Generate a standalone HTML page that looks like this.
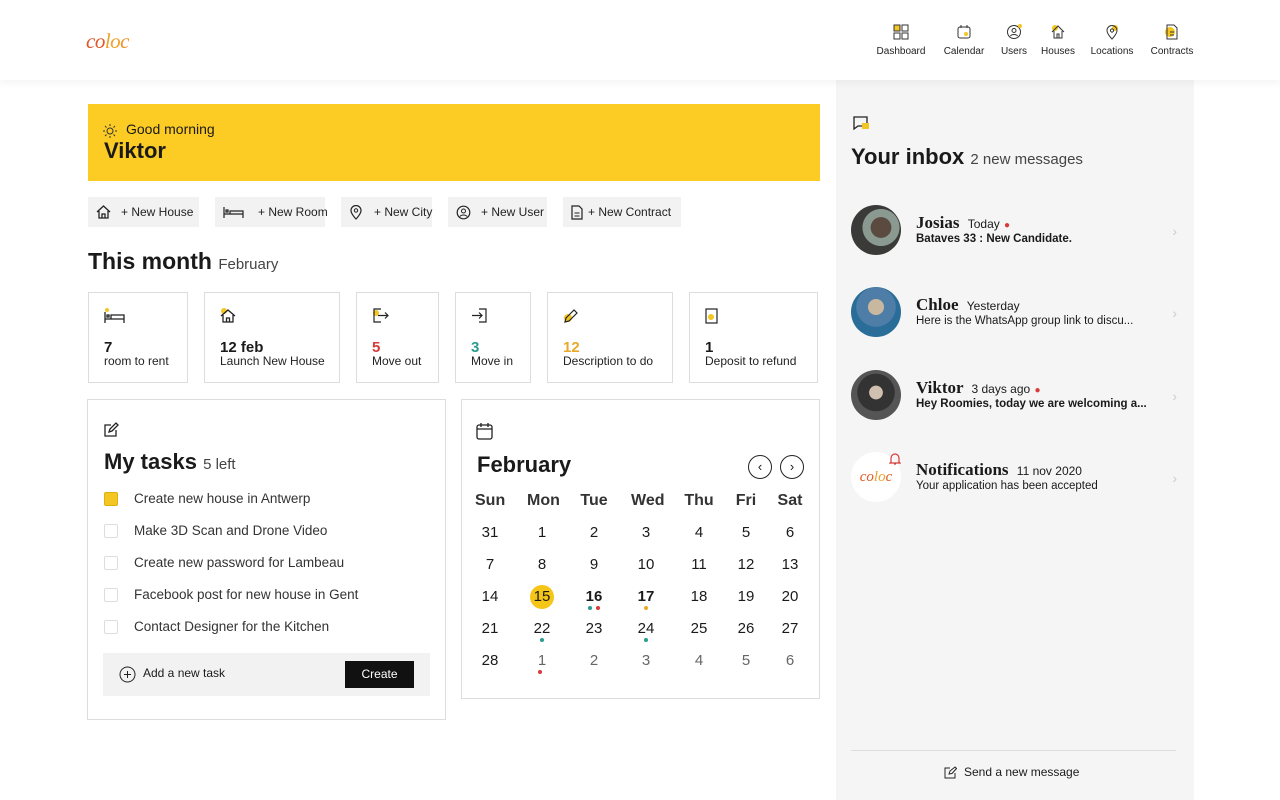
<!DOCTYPE html>
<html><head><meta charset="utf-8"><style>
*{box-sizing:border-box;margin:0;padding:0}
body{width:1280px;height:800px;overflow:hidden;background:#fff;font-family:"Liberation Sans",sans-serif;color:#1a1a1a;position:relative}
.abs{position:absolute}
header{position:absolute;left:0;top:0;width:1280px;height:80px;background:#fff;box-shadow:0 2px 8px rgba(0,0,0,.06);z-index:2}
.nav{position:absolute;top:24px;font-size:10px;text-align:center;color:#222;white-space:nowrap}
.nav svg{display:block;margin:0 auto 6px}
.btn{position:absolute;top:197px;height:30px;background:#f2f2f2;font-size:12px;line-height:30px;padding-left:33px;color:#222;white-space:nowrap}
.btn svg{position:absolute;left:8px;top:8px}
.card{position:absolute;top:292px;height:91px;border:1px solid #ddd;background:#fff}
.card .n{position:absolute;left:15px;top:46px;font-weight:bold;font-size:15px}
.card .l{position:absolute;left:15px;top:61px;font-size:12px;color:#222;white-space:nowrap}
.card svg{position:absolute;left:15px;top:15px}
.box{position:absolute;border:1px solid #ddd;background:#fff}
.task{position:absolute;left:16px;font-size:13.5px;color:#333}
.task i{position:absolute;left:0;top:1px;width:14px;height:14px;border:1px solid #ddd;border-radius:2px;background:#fff}
.task span{position:absolute;left:30px;white-space:nowrap}
.cal{position:absolute;font-size:15px;text-align:center;width:30px;margin-left:-15px}
.dot{position:absolute;width:4px;height:4px;border-radius:2px}
.msg{position:absolute;left:851px;width:330px;height:60px}
.av{position:absolute;left:0;top:0;width:50px;height:50px;border-radius:25px}
.nm{position:absolute;left:65px;top:8px;font-family:"Liberation Serif",serif;font-weight:bold;font-size:17px;white-space:nowrap}
.nm small{font-family:"Liberation Sans",sans-serif;font-weight:normal;font-size:12px;margin-left:4px}
.tx{position:absolute;left:65px;top:28px;font-size:11.5px;white-space:nowrap}
.chev{position:absolute;right:4px;top:18px;color:#ccc;font-size:14px}
</style></head><body>
<header>
<div class="abs" style="left:86px;top:29px;font-size:21px;letter-spacing:-0.5px;color:#e0582a;font-family:'Liberation Serif',serif;font-style:italic">co<span style="color:#f1a12a">lo</span><span style="color:#f0902a">c</span></div>
<div class="nav" style="left:872px;width:58px"><svg width="16" height="16"><rect x="1" y="1" width="6" height="6" fill="#f3c623" stroke="#333"/><rect x="9" y="1" width="6" height="6" fill="none" stroke="#333"/><rect x="1" y="9" width="6" height="6" fill="none" stroke="#333"/><rect x="9" y="9" width="6" height="6" fill="none" stroke="#333"/></svg>Dashboard</div>
<div class="nav" style="left:940px;width:48px"><svg width="16" height="16"><rect x="2" y="3" width="12" height="11" rx="2" fill="none" stroke="#333"/><line x1="5" y1="1" x2="5" y2="4" stroke="#333"/><line x1="11" y1="1" x2="11" y2="4" stroke="#333"/><circle cx="10" cy="10" r="2" fill="#f3c623"/></svg>Calendar</div>
<div class="nav" style="left:998px;width:32px"><svg width="16" height="16"><circle cx="8" cy="8" r="6.5" fill="none" stroke="#333"/><circle cx="8" cy="6.5" r="2" fill="none" stroke="#333"/><path d="M4.5 12c1-2 6-2 7 0" fill="none" stroke="#333"/><circle cx="14" cy="2" r="2" fill="#f3c623"/></svg>Users</div>
<div class="nav" style="left:1040px;width:36px"><svg width="16" height="16"><circle cx="5" cy="4" r="3" fill="#f3c623"/><path d="M2 8L8 2l6 6M4 7v7h8V7M7 14v-4h2v4" fill="none" stroke="#333"/></svg>Houses</div>
<div class="nav" style="left:1088px;width:48px"><svg width="16" height="16"><circle cx="11" cy="4" r="3" fill="#f3c623"/><path d="M8 15s5-5 5-8.5A5 5 0 0 0 3 6.5C3 10 8 15 8 15z" fill="none" stroke="#333"/><circle cx="8" cy="6.5" r="1.6" fill="none" stroke="#333"/></svg>Locations</div>
<div class="nav" style="left:1146px;width:52px"><svg width="16" height="16"><circle cx="6" cy="8" r="5" fill="#f3c623"/><path d="M3 1h7l3 3v11H3z" fill="none" stroke="#333"/><line x1="6" y1="8" x2="10" y2="8" stroke="#333"/><line x1="6" y1="11" x2="10" y2="11" stroke="#333"/></svg>Contracts</div>
</header>

<div class="abs" style="left:836px;top:80px;width:358px;height:720px;background:#f5f5f5"></div>

<div class="abs" style="left:88px;top:104px;width:732px;height:77px;background:#fccb24"></div>
<svg class="abs" style="left:102px;top:123px" width="16" height="16"><circle cx="8" cy="8" r="3" fill="none" stroke="#333"/><g stroke="#333"><line x1="8" y1="1" x2="8" y2="3"/><line x1="8" y1="13" x2="8" y2="15"/><line x1="1" y1="8" x2="3" y2="8"/><line x1="13" y1="8" x2="15" y2="8"/><line x1="3" y1="3" x2="4.5" y2="4.5"/><line x1="11.5" y1="11.5" x2="13" y2="13"/><line x1="3" y1="13" x2="4.5" y2="11.5"/><line x1="11.5" y1="4.5" x2="13" y2="3"/></g></svg>
<div class="abs" style="left:126px;top:121px;font-size:14px">Good morning</div>
<div class="abs" style="left:104px;top:138px;font-size:22px;font-weight:bold">Viktor</div>

<div class="btn" style="left:88px;width:111px"><svg width="15" height="14"><path d="M1 7L7.5 1 14 7M3 6v7h9V6M6 13V9h3v4" fill="none" stroke="#222" stroke-width="1.3"/></svg>+ New House</div>
<div class="btn" style="left:215px;width:110px;padding-left:43px"><svg width="22" height="14"><path d="M1 2v11M1 9h19v4M20 9V6H7v3M3 5h2v2H3z" fill="none" stroke="#222" stroke-width="1.2"/></svg>+ New Room</div>
<div class="btn" style="left:341px;width:91px"><svg width="14" height="15"><path d="M7 14s5-5 5-8.5a5 5 0 0 0-10 0C2 9 7 14 7 14z" fill="none" stroke="#222" stroke-width="1.2"/><circle cx="7" cy="5.5" r="1.7" fill="none" stroke="#222"/></svg>+ New City</div>
<div class="btn" style="left:448px;width:99px"><svg width="15" height="15"><circle cx="7.5" cy="7.5" r="6.3" fill="none" stroke="#222" stroke-width="1.2"/><circle cx="7.5" cy="6" r="2" fill="none" stroke="#222"/><path d="M4 11.5c1-2 6-2 7 0" fill="none" stroke="#222"/></svg>+ New User</div>
<div class="btn" style="left:563px;width:118px;padding-left:25px"><svg width="12" height="15"><path d="M1 1h7l3 3v10H1z" fill="none" stroke="#222" stroke-width="1.2"/><line x1="3.5" y1="8" x2="8.5" y2="8" stroke="#222"/><line x1="3.5" y1="11" x2="8.5" y2="11" stroke="#222"/></svg>+ New Contract</div>

<div class="abs" style="left:88px;top:248px;font-size:23px;font-weight:bold">This month <span style="font-size:15px;font-weight:normal;color:#444">February</span></div>

<div class="card" style="left:88px;width:100px"><svg width="22" height="16"><circle cx="3" cy="2" r="2" fill="#f3c623"/><path d="M1 4v11M1 11h19v4M20 11V7H7v4M3 7h2v2H3z" fill="none" stroke="#222" stroke-width="1.3"/></svg><div class="n">7</div><div class="l">room to rent</div></div>
<div class="card" style="left:204px;width:136px"><svg width="16" height="16"><circle cx="4" cy="3" r="3" fill="#f3c623"/><path d="M1 8L8 2l7 6M3 7v7h10V7M6.5 14v-4h3v4" fill="none" stroke="#222" stroke-width="1.3"/></svg><div class="n">12 feb</div><div class="l">Launch New House</div></div>
<div class="card" style="left:356px;width:83px"><svg width="17" height="16"><circle cx="4" cy="5" r="3" fill="#f3c623"/><path d="M9 1H2v13h7M6 7.5h10M13 4.5l3 3-3 3" fill="none" stroke="#222" stroke-width="1.2"/></svg><div class="n" style="color:#d93a3a">5</div><div class="l">Move out</div></div>
<div class="card" style="left:455px;width:76px"><svg width="17" height="16"><path d="M8 1h7v13H8M1 7.5h10M8 4.5l3 3-3 3" fill="none" stroke="#222" stroke-width="1.2"/></svg><div class="n" style="color:#2a9d8f">3</div><div class="l">Move in</div></div>
<div class="card" style="left:547px;width:126px"><svg width="16" height="16"><circle cx="5" cy="10" r="4" fill="#f3c623"/><path d="M2 14l1-4 8-8 3 3-8 8z" fill="none" stroke="#222" stroke-width="1.2"/></svg><div class="n" style="color:#e8a92a">12</div><div class="l">Description to do</div></div>
<div class="card" style="left:689px;width:129px"><svg width="14" height="16"><rect x="1" y="1" width="11" height="14" fill="none" stroke="#222" stroke-width="1.2"/><circle cx="6" cy="9" r="3" fill="#f3c623"/></svg><div class="n">1</div><div class="l">Deposit to refund</div></div>

<div class="box" style="left:87px;top:399px;width:359px;height:321px">
<svg class="abs" style="left:15px;top:22px" width="16" height="16"><path d="M13 8v6H2V3h6" fill="none" stroke="#222" stroke-width="1.3"/><path d="M6 10l1-3 6-6 2 2-6 6z" fill="none" stroke="#222" stroke-width="1.3"/></svg>
<div class="abs" style="left:16px;top:49px;font-size:22px;font-weight:bold">My tasks <span style="font-size:15px;font-weight:normal;color:#444">5 left</span></div>
<div class="task" style="top:91px"><i style="background:#f3c623;border-color:#e0b010"></i><span>Create new house in Antwerp</span></div>
<div class="task" style="top:123px"><i></i><span>Make 3D Scan and Drone Video</span></div>
<div class="task" style="top:155px"><i></i><span>Create new password for Lambeau</span></div>
<div class="task" style="top:187px"><i></i><span>Facebook post for new house in Gent</span></div>
<div class="task" style="top:219px"><i></i><span>Contact Designer for the Kitchen</span></div>
<div class="abs" style="left:15px;top:253px;width:327px;height:43px;background:#f2f2f2">
<svg class="abs" style="left:16px;top:13px" width="17" height="17"><circle cx="8.5" cy="8.5" r="7.5" fill="none" stroke="#222"/><path d="M8.5 5v7M5 8.5h7" stroke="#222"/></svg>
<div class="abs" style="left:40px;top:13px;font-size:12px">Add a new task</div>
<div class="abs" style="left:242px;top:8px;width:69px;height:27px;background:#111;color:#fff;font-size:12px;line-height:27px;text-align:center">Create</div>
</div>
</div>

<div class="box" style="left:461px;top:399px;width:359px;height:300px"></div>
<svg class="abs" style="left:476px;top:422px" width="17" height="18"><rect x="1" y="3" width="15" height="14" rx="2" fill="none" stroke="#222" stroke-width="1.3"/><path d="M5 1v4M12 1v4M1 7h15" stroke="#222" stroke-width="1.3"/></svg>
<div class="abs" style="left:477px;top:452px;font-size:22px;font-weight:bold">February</div>
<div class="abs" style="left:748px;top:455px;width:24px;height:24px;border:1px solid #222;border-radius:12px;font-size:13px;text-align:center;line-height:21px">‹</div>
<div class="abs" style="left:780px;top:455px;width:24px;height:24px;border:1px solid #222;border-radius:12px;font-size:13px;text-align:center;line-height:21px">›</div>
<div class="abs" style="left:530px;top:585px;width:24px;height:24px;border-radius:12px;background:#f5c518"></div>
<div id="cal"></div>

<svg class="abs" style="left:853px;top:116px" width="18" height="16"><path d="M1 1h13v9H5l-4 3z" fill="none" stroke="#222" stroke-width="1.3"/><rect x="9" y="7" width="7" height="6" fill="#f3c623"/></svg>
<div class="abs" style="left:851px;top:144px;font-size:22px;font-weight:bold">Your inbox <span style="font-size:15px;font-weight:normal;color:#444">2 new messages</span></div>

<div class="msg" style="top:205px"><div class="av" style="background:radial-gradient(circle at 60% 45%,#5a4a40 0 25%,#8a9a90 26% 45%,#3a3a38 46%)"></div><div class="nm">Josias <small>Today</small> <span style="color:#d93a3a;font-size:10px">●</span></div><div class="tx" style="font-weight:bold">Bataves 33 : New Candidate.</div><div class="chev">›</div></div>
<div class="msg" style="top:287px"><div class="av" style="background:radial-gradient(circle at 50% 40%,#c9b8a0 0 20%,#4e7ea8 21% 50%,#2a6d98 51%)"></div><div class="nm">Chloe <small>Yesterday</small></div><div class="tx">Here is the WhatsApp group link to discu...</div><div class="chev">›</div></div>
<div class="msg" style="top:370px"><div class="av" style="background:radial-gradient(circle at 50% 45%,#d0c0b0 0 18%,#333 19% 50%,#555 51%)"></div><div class="nm">Viktor <small>3 days ago</small> <span style="color:#d93a3a;font-size:10px">●</span></div><div class="tx" style="font-weight:bold">Hey Roomies, today we are welcoming a...</div><div class="chev">›</div></div>
<div class="msg" style="top:452px"><div class="av" style="background:#fff;text-align:center;line-height:50px;font-size:15px;color:#e0582a;font-family:'Liberation Serif',serif;font-style:italic">co<span style="color:#f1a12a">lo</span>c</div><div class="nm">Notifications <small>11 nov 2020</small></div><div class="tx">Your application has been accepted</div><div class="chev">›</div></div>
<svg class="abs" style="left:889px;top:452px" width="12" height="13"><path d="M2 10V6a4 4 0 0 1 8 0v4l1 1H1zM5 12h2" fill="none" stroke="#d93a3a" stroke-width="1.2"/></svg>

<div class="abs" style="left:851px;top:750px;width:325px;height:1px;background:#ddd"></div>
<svg class="abs" style="left:944px;top:766px" width="13" height="13"><path d="M11 7v5H1V2h5" fill="none" stroke="#222"/><path d="M5 8l1-3 5-4 1.5 1.5-4.5 5z" fill="none" stroke="#222"/></svg>
<div class="abs" style="left:964px;top:765px;font-size:12px">Send a new message</div>

<script>
var xs=[490,542,594,646,699,746,790],h=["Sun","Mon","Tue","Wed","Thu","Fri","Sat"];
var rows=[[31,1,2,3,4,5,6],[7,8,9,10,11,12,13],[14,15,16,17,18,19,20],[21,22,23,24,25,26,27],[28,1,2,3,4,5,6]];
var o="";
h.forEach(function(t,i){o+='<div class="cal" style="left:'+xs[i]+'px;top:492px;font-weight:bold;font-size:16px;color:#333">'+t+'</div>';});
rows.forEach(function(r,ri){r.forEach(function(d,i){var st='left:'+xs[i]+'px;top:'+(524+ri*32)+'px;';
if(ri==4&&i>0)st+='color:#666;';if(ri==2&&(i==2||i==3))st+='font-weight:bold;';
o+='<div class="cal" style="'+st+'">'+d+'</div>';});});
function dot(x,y,c){o+='<div class="dot" style="left:'+x+'px;top:'+y+'px;background:'+c+'"></div>';}
dot(588,606,"#2a9d8f");dot(596,606,"#d93a3a");dot(644,606,"#e8a92a");dot(540,638,"#2a9d8f");dot(644,638,"#2a9d8f");dot(538,670,"#d93a3a");
document.getElementById("cal").innerHTML=o;
</script>
</body></html>
